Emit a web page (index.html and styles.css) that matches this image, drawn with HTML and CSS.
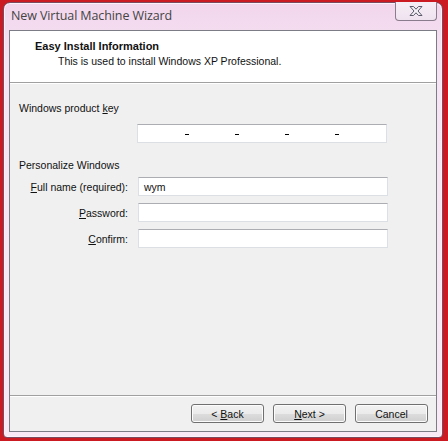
FILE: index.html
```html
<!DOCTYPE html>
<html>
<head>
<meta charset="utf-8">
<link rel="stylesheet" href="styles.css">
</head>
<body>
<div class="window">
  <div class="titlebar">New Virtual Machine Wizard</div>
  <div class="close">
    <svg width="16" height="12" viewBox="0 0 16 12"><path d="M2 1.5 H5.5 L8 4.2 L10.5 1.5 H14 L10 6 L14 10.5 H10.5 L8 7.8 L5.5 10.5 H2 L6 6 Z" fill="#f4f0f6" stroke="#5a5a6a" stroke-width="1"/></svg>
  </div>
  <div class="content">
    <div class="header">
      <div class="h-title">Easy Install Information</div>
      <div class="h-sub">This is used to install Windows XP Professional.</div>
    </div>
    <div class="body">
      <div class="section">Windows product <u>k</u>ey</div>
      <div class="row key-row">
        <div class="field key">
          <span class="dash"></span><span class="dash"></span><span class="dash"></span><span class="dash"></span>
        </div>
      </div>
      <div class="section sec2">Personalize Windows</div>
      <div class="form">
        <label class="lbl"><u>F</u>ull name (required):</label>
        <div class="field"><span class="val">wym</span></div>
        <label class="lbl"><u>P</u>assword:</label>
        <div class="field"></div>
        <label class="lbl"><u>C</u>onfirm:</label>
        <div class="field"></div>
      </div>
    </div>
    <div class="footer">
      <button class="btn">&lt; <u>B</u>ack</button>
      <button class="btn"><u>N</u>ext &gt;</button>
      <button class="btn">Cancel</button>
    </div>
  </div>
</div>
</body>
</html>
```
FILE: styles.css
```css
html, body {
  margin: 0;
  padding: 0;
}
body {
  width: 448px;
  height: 441px;
  overflow: hidden;
  background: #cc1a22;
  font-family: "Liberation Sans", Arial, sans-serif;
  font-size: 10.5px;
  color: #111;
}
.window {
  position: relative;
  box-sizing: border-box;
  margin: 2px 5px 0 3px;
  width: 440px;
  height: 436px;
  border: 1px solid #7a4a60;
  border-radius: 7px 7px 4px 4px;
  background: linear-gradient(#f2d6ec, #f6e3f3 60px, #f9e9f6);
  box-shadow: inset 0 0 0 1px #fbf2fa;
  display: flex;
  flex-direction: column;
}
.titlebar {
  height: 27px;
  box-sizing: border-box;
  padding: 4px 0 0 7px;
  font-family: "Open Sans", "Liberation Sans", sans-serif;
  font-size: 12.5px;
  color: #444;
  letter-spacing: -0.1px;
}
.close {
  position: absolute;
  top: -1px;
  right: 5px;
  width: 42px;
  height: 19px;
  box-sizing: border-box;
  border: 1px solid #8a7c8c;
  border-top: none;
  border-radius: 0 0 4px 4px;
  background: linear-gradient(#f6eef6, #efe2ef);
  display: flex;
  align-items: center;
  justify-content: center;
}
.content {
  flex: 1;
  margin: 0 5px 5px 5px;
  border: 1px solid #7c7c86;
  background: #f0f0f0;
  display: flex;
  flex-direction: column;
}
.header {
  height: 52px;
  box-sizing: border-box;
  background: #fff;
  border-bottom: 1px solid #a0a0a0;
  padding: 9px 0 0 25px;
}
.h-title {
  font-weight: bold;
  font-size: 11px;
  height: 15px;
}
.h-sub {
  padding-left: 23px;
  height: 14px;
}
.body {
  flex: 1;
  border-top: 1px solid #fff;
  padding: 18px 0 0 9px;
}
.section {
  height: 13px;
}
.key-row {
  padding: 9px 0 0 118px;
}
.field {
  box-sizing: border-box;
  width: 250px;
  height: 19px;
  background: #fff;
  border: 1px solid #dcdfe4;
  border-top-color: #abadb3;
  display: flex;
  align-items: center;
}
.key {
  position: relative;
}
.dash {
  position: absolute;
  top: 9px;
  width: 4px;
  height: 1px;
  background: #000;
}
.dash:nth-child(1) { left: 47px; }
.dash:nth-child(2) { left: 97px; }
.dash:nth-child(3) { left: 147px; }
.dash:nth-child(4) { left: 197px; }
.sec2 {
  margin-top: 16px;
}
.form {
  margin-top: 5px;
  display: grid;
  grid-template-columns: 118px 250px;
  column-gap: 10px;
  row-gap: 7px;
  margin-left: -9px;
}
.lbl {
  text-align: right;
  align-self: center;
}
.val {
  padding-left: 5px;
}
.footer {
  height: 36px;
  box-sizing: border-box;
  border-top: 1px solid #a0a0a0;
  box-shadow: inset 0 1px 0 #fff;
  display: flex;
  justify-content: flex-end;
  gap: 9px;
  padding: 8px 8px 0 0;
}
.btn {
  width: 73px;
  height: 19px;
  box-sizing: border-box;
  padding: 0;
  font-family: "Liberation Sans", Arial, sans-serif;
  font-size: 10.5px;
  color: #111;
  border: 1px solid #707070;
  border-radius: 3px;
  background: linear-gradient(#f2f2f2 0%, #ebebeb 50%, #dddddd 51%, #cfcfcf 100%);
  box-shadow: inset 0 0 0 1px #fcfcfc;
}
```
